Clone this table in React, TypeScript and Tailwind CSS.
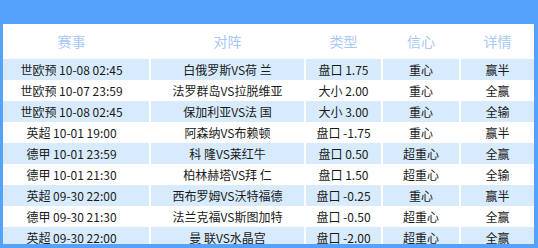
const rows = [
  ["世欧预 10-08 02:45", "白俄罗斯VS荷 兰", "盘口 1.75", "重心", "赢半"],
  ["世欧预 10-07 23:59", "法罗群岛VS拉脱维亚", "大小 2.00", "重心", "全赢"],
  ["世欧预 10-08 02:45", "保加利亚VS法 国", "大小 3.00", "重心", "全输"],
  ["英超 10-01 19:00", "阿森纳VS布赖顿", "盘口 -1.75", "重心", "赢半"],
  ["德甲 10-01 23:59", "科 隆VS莱红牛", "盘口 0.50", "超重心", "全赢"],
  ["德甲 10-01 21:30", "柏林赫塔VS拜 仁", "盘口 1.50", "超重心", "全输"],
  ["英超 09-30 22:00", "西布罗姆VS沃特福德", "盘口 -0.25", "重心", "赢半"],
  ["德甲 09-30 21:30", "法兰克福VS斯图加特", "盘口 -0.50", "超重心", "全赢"],
  ["英超 09-30 22:00", "曼 联VS水晶宫", "盘口 -2.00", "超重心", "全赢"],
];

const headers = ["赛事", "对阵", "类型", "信心", "详情"];

export default function App() {
  return (
    <div
      className="flex h-[248px] w-[538px] flex-col overflow-hidden bg-[#55a2fc] pl-[3px] pr-[4px] pt-[24px]"
      style={{ fontFamily: '"Noto Sans CJK SC", "Noto Sans", sans-serif' }}
    >
      <div className="h-[220px] shrink-0 overflow-hidden bg-white">
        <div className="grid grid-cols-[146px_153px_75px_76px_73px] gap-x-[2px]">
          {headers.map((h, j) => (
            <div
              key={h}
              className={
                "flex h-[35px] items-center justify-center text-[14px] text-[#a8c8f6] " +
                (j === 0 ? "pr-[9px]" : "")
              }
            >
              {h}
            </div>
          ))}
          {rows.map((row, i) =>
            row.map((cell, j) => (
              <div
                key={i + "-" + j}
                className={
                  "flex h-[21px] items-center justify-center whitespace-nowrap text-[12px] text-[#1a1a1a] " +
                  (i % 2 === 0 ? "bg-[#d7ebfd] " : "bg-white ") +
                  (j === 0 ? "pr-[9px]" : "")
                }
              >
                {cell}
              </div>
            ))
          )}
        </div>
      </div>
    </div>
  );
}
